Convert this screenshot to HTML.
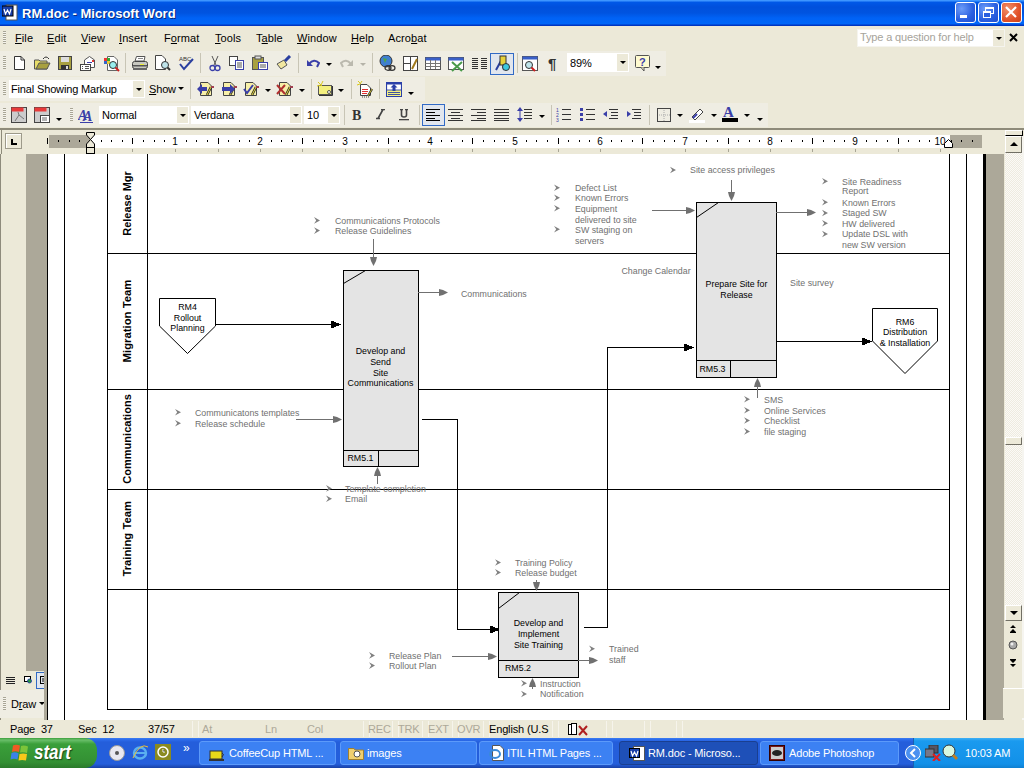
<!DOCTYPE html>
<html><head><meta charset="utf-8">
<style>
*{box-sizing:border-box}
html,body{margin:0;padding:0}
body{width:1024px;height:768px;overflow:hidden;position:relative;background:#ECE9D8;font-family:"Liberation Sans",sans-serif;font-size:11px;color:#000}
.a{position:absolute}
.t{position:absolute;white-space:nowrap;line-height:1}
.grip{position:absolute;width:3px;background:repeating-linear-gradient(#A8A595 0,#A8A595 1px,#F6F5EE 1px,#F6F5EE 2px)}
.dd{position:absolute;width:0;height:0;border-left:3px solid transparent;border-right:3px solid transparent;border-top:3px solid #000}
u{text-decoration:underline}
.dg text{font-family:"Liberation Sans",sans-serif}
</style></head><body>
<div class="a" style="left:0px;top:0px;width:1024px;height:26px;background:linear-gradient(#3D95FF 0,#3D95FF 1px,#0058E8 2px,#0050DC 7px,#0054E0 13px,#0062F5 18px,#0066F8 24px,#0035C0 25px)"></div>
<svg class="a" style="left:2px;top:4px" width="16" height="17" viewBox="0 0 16 17"><rect x="4" y="1" width="11" height="15" fill="#fff" stroke="#555" stroke-width="1"/><rect x="0" y="2" width="11" height="10" fill="#1A3FA8" stroke="#000" stroke-width="1"/><path d="M2,5 L3.5,10 L5.5,6 L7.5,10 L9,5" stroke="#fff" stroke-width="1.2" fill="none"/></svg>
<div class="t" style="left:22px;top:7px;font-size:13px;font-weight:bold;color:#fff;letter-spacing:0;text-shadow:1px 1px 0 #0A2A80">RM.doc - Microsoft Word</div>
<div class="a" style="left:955px;top:2px;width:21px;height:21px;border:1px solid #fff;border-radius:3px;background:radial-gradient(circle at 30% 30%,#6C9CF8,#2A5FE0 60%,#1E4FD0)"></div>
<svg class="a" style="left:955px;top:2px" width="21" height="21" viewBox="0 0 21 21"><rect x="5" y="13" width="7" height="3" fill="#fff"/></svg>
<div class="a" style="left:978px;top:2px;width:21px;height:21px;border:1px solid #fff;border-radius:3px;background:radial-gradient(circle at 30% 30%,#6C9CF8,#2A5FE0 60%,#1E4FD0)"></div>
<svg class="a" style="left:978px;top:2px" width="21" height="21" viewBox="0 0 21 21"><rect x="7.5" y="5.5" width="8" height="6" fill="none" stroke="#fff" stroke-width="1"/><rect x="7" y="5" width="9" height="2" fill="#fff"/><rect x="5.5" y="9.5" width="7" height="6" fill="#2A5FE0" stroke="#fff" stroke-width="1"/><rect x="5" y="9" width="8" height="2" fill="#fff"/></svg>
<div class="a" style="left:1001px;top:2px;width:21px;height:21px;border:1px solid #fff;border-radius:3px;background:radial-gradient(circle at 30% 30%,#F0906A,#E2532A 60%,#C8401A)"></div>
<svg class="a" style="left:1001px;top:2px" width="21" height="21" viewBox="0 0 21 21"><path d="M5,5 L15,15 M15,5 L5,15" stroke="#fff" stroke-width="2.2"/></svg>
<div class="grip" style="left:3px;top:31px;height:13px"></div>
<div class="t" style="left:15px;top:32.69px;font-size:11px;color:#000;letter-spacing:0.1px"><u>F</u>ile</div>
<div class="t" style="left:47px;top:32.69px;font-size:11px;color:#000;letter-spacing:0.1px"><u>E</u>dit</div>
<div class="t" style="left:81px;top:32.69px;font-size:11px;color:#000;letter-spacing:0.1px"><u>V</u>iew</div>
<div class="t" style="left:119px;top:32.69px;font-size:11px;color:#000;letter-spacing:0.1px"><u>I</u>nsert</div>
<div class="t" style="left:164px;top:32.69px;font-size:11px;color:#000;letter-spacing:0.1px">F<u>o</u>rmat</div>
<div class="t" style="left:215px;top:32.69px;font-size:11px;color:#000;letter-spacing:0.1px"><u>T</u>ools</div>
<div class="t" style="left:256px;top:32.69px;font-size:11px;color:#000;letter-spacing:0.1px">T<u>a</u>ble</div>
<div class="t" style="left:297px;top:32.69px;font-size:11px;color:#000;letter-spacing:0.1px"><u>W</u>indow</div>
<div class="t" style="left:351px;top:32.69px;font-size:11px;color:#000;letter-spacing:0.1px"><u>H</u>elp</div>
<div class="t" style="left:388px;top:32.69px;font-size:11px;color:#000;letter-spacing:0.1px">Acro<u>b</u>at</div>
<div class="a" style="left:857px;top:29px;width:148px;height:18px;background:#fff;border:1px solid #F5F4EE"></div>
<div class="a" style="left:993px;top:30px;width:11px;height:16px;background:#ECE9D8"></div>
<div class="dd" style="left:996px;top:37px;border-top-color:#000"></div>
<div class="t" style="left:860px;top:31.69px;font-size:11px;color:#A6A39A;letter-spacing:-0.15px;">Type a question for help</div>
<svg class="a" style="left:1009px;top:33px" width="10" height="10" viewBox="0 0 10 10"><path d="M1,1 L8,8 M8,1 L1,8" stroke="#000" stroke-width="2"/></svg>
<div class="a" style="left:0px;top:51px;width:666px;height:25px;background:#EFEDE3"></div>
<div class="grip" style="left:3px;top:56px;height:13px"></div>
<div class="a" style="left:125px;top:53px;width:1px;height:20px;background:#C8C5B5"></div>
<div class="a" style="left:200px;top:53px;width:1px;height:20px;background:#C8C5B5"></div>
<div class="a" style="left:298px;top:53px;width:1px;height:20px;background:#C8C5B5"></div>
<div class="a" style="left:372px;top:53px;width:1px;height:20px;background:#C8C5B5"></div>
<div class="a" style="left:517px;top:53px;width:1px;height:20px;background:#C8C5B5"></div>
<svg class="a" style="left:13px;top:56px" width="13" height="14" viewBox="0 0 13 14"><path d="M1.5,0.5 H8 L11.5,4 V13.5 H1.5 Z" fill="#fff" stroke="#333"/><path d="M8,0.5 V4 H11.5" fill="none" stroke="#333"/></svg>
<svg class="a" style="left:34px;top:55px" width="17" height="15" viewBox="0 0 17 15"><path d="M0.5,5 H5 L6,6 H13 V14 H0.5 Z" fill="#E8DE6A" stroke="#555"/><path d="M2,14 L5,8 H16 L13,14 Z" fill="#A8A040" stroke="#555"/><path d="M9,4 Q12,0 15,4" stroke="#333" fill="none"/></svg>
<svg class="a" style="left:58px;top:56px" width="14" height="14" viewBox="0 0 14 14"><rect x="0.5" y="0.5" width="13" height="13" fill="#A8A040" stroke="#444"/><rect x="3" y="1" width="8" height="5" fill="#ddd"/><rect x="3" y="9" width="8" height="4.5" fill="#333"/><rect x="8" y="10" width="2" height="3" fill="#ddd"/></svg>
<svg class="a" style="left:80px;top:55px" width="16" height="16" viewBox="0 0 16 16"><path d="M4.5,5 L9.5,1.5 L14.5,5 V12.5 H4.5 Z" fill="#fff" stroke="#555"/><path d="M7,7.5 H12" stroke="#3A3FA8"/><rect x="12" y="5" width="2" height="2" fill="#d33"/><rect x="0.5" y="9.5" width="10" height="6" fill="#fff" stroke="#444"/><path d="M2,11.5 H3 M5,11.5 H9 M2,13.5 H3 M5,13.5 H9" stroke="#555"/></svg>
<svg class="a" style="left:104px;top:56px" width="16" height="16" viewBox="0 0 16 16"><path d="M3.5,0.5 H10 L13.5,4 V14.5 H3.5 Z" fill="#fff" stroke="#666"/><rect x="0" y="2" width="3" height="3" fill="#e33"/><rect x="3" y="2" width="3" height="3" fill="#3a3"/><rect x="0" y="5" width="3" height="3" fill="#36c"/><rect x="3" y="5" width="3" height="3" fill="#ec3"/><circle cx="9" cy="9" r="3.5" fill="#9ee" stroke="#333"/><path d="M11.5,11.5 L15,15" stroke="#c22" stroke-width="2"/></svg>
<svg class="a" style="left:132px;top:56px" width="16" height="15" viewBox="0 0 16 15"><path d="M4.5,0.5 H13 L12,5 H3 Z" fill="#fff" stroke="#555"/><path d="M6,2.5 H11" stroke="#888"/><rect x="0.5" y="5.5" width="15" height="7" rx="2" fill="#C8C8C0" stroke="#444"/><rect x="1" y="9" width="14" height="1.5" fill="#555"/><rect x="8" y="8" width="4" height="1" fill="#ee3"/><rect x="1" y="12" width="14" height="2" fill="#666"/></svg>
<svg class="a" style="left:155px;top:55px" width="16" height="16" viewBox="0 0 16 16"><path d="M0.5,0.5 H7 L10.5,4 V14.5 H0.5 Z" fill="#fff" stroke="#444"/><circle cx="10" cy="10" r="3.5" fill="#BFE4EA" stroke="#333"/><path d="M12.5,12.5 L15,15" stroke="#333" stroke-width="2"/></svg>
<svg class="a" style="left:178px;top:55px" width="16" height="16" viewBox="0 0 16 16"><text x="1" y="6" font-size="6" font-family="Liberation Sans" fill="#333">ABC</text><path d="M2,9 L6,14 L15,4" stroke="#2A3F9F" stroke-width="2" fill="none"/></svg>
<svg class="a" style="left:209px;top:56px" width="12" height="16" viewBox="0 0 12 16"><path d="M3,0 L7,9 M9,0 L5,9" stroke="#555" stroke-width="1"/><circle cx="3.5" cy="12" r="2.5" fill="none" stroke="#3A3FA8" stroke-width="1.3"/><circle cx="8.5" cy="12" r="2.5" fill="none" stroke="#3A3FA8" stroke-width="1.3"/></svg>
<svg class="a" style="left:229px;top:56px" width="16" height="15" viewBox="0 0 16 15"><rect x="0.5" y="0.5" width="8" height="9" fill="#fff" stroke="#444"/><rect x="6.5" y="4.5" width="8" height="9" fill="#fff" stroke="#3A3FA8"/><path d="M8,7 H13 M8,9 H13 M8,11 H13" stroke="#555"/></svg>
<svg class="a" style="left:252px;top:55px" width="17" height="16" viewBox="0 0 17 16"><rect x="0.5" y="2.5" width="11" height="12" fill="#A8A040" stroke="#555"/><rect x="3" y="1" width="6" height="3" fill="#ddd" stroke="#555"/><rect x="6.5" y="7.5" width="9" height="7" fill="#fff" stroke="#3A3FA8"/><path d="M8,10 H14 M8,12 H14" stroke="#555"/></svg>
<svg class="a" style="left:276px;top:55px" width="16" height="16" viewBox="0 0 16 16"><path d="M1,9 L8,5 L11,10 L5,14 Z" fill="#F1E7A0" stroke="#555"/><path d="M9,6 L14,1" stroke="#2A3F9F" stroke-width="3"/></svg>
<svg class="a" style="left:306px;top:58px" width="14" height="11" viewBox="0 0 14 11"><path d="M3,6 Q8,0 13,5 L11,9" stroke="#3A3FA8" stroke-width="2" fill="none"/><path d="M1,2 L1,8 L7,8 Z" fill="#3A3FA8"/></svg>
<div class="dd" style="left:326px;top:63px;border-top-color:#000"></div>
<svg class="a" style="left:340px;top:58px" width="14" height="11" viewBox="0 0 14 11"><path d="M11,6 Q6,0 1,5 L3,9" stroke="#BBB9AE" stroke-width="2" fill="none"/><path d="M13,2 L13,8 L7,8 Z" fill="#BBB9AE"/></svg>
<div class="dd" style="left:360px;top:63px;border-top-color:#B5B3A8"></div>
<svg class="a" style="left:379px;top:55px" width="17" height="16" viewBox="0 0 17 16"><circle cx="7" cy="6" r="6" fill="#3F7FD0" stroke="#333"/><path d="M4,3 L8,4 L6,8 Z" fill="#4CA64C"/><ellipse cx="9" cy="13" rx="3" ry="2.3" fill="none" stroke="#333" stroke-width="1.2"/><ellipse cx="13" cy="13" rx="3" ry="2.3" fill="none" stroke="#333" stroke-width="1.2"/></svg>
<svg class="a" style="left:403px;top:56px" width="16" height="16" viewBox="0 0 16 16"><rect x="0.5" y="0.5" width="14" height="14" fill="#fff" stroke="#444"/><path d="M7.5,0.5 V14.5 M0.5,7.5 H7.5" stroke="#444"/><path d="M9,13 L14,3" stroke="#A0791A" stroke-width="2"/></svg>
<svg class="a" style="left:425px;top:57px" width="16" height="14" viewBox="0 0 16 14"><rect x="0.5" y="0.5" width="15" height="12" fill="#fff" stroke="#555"/><rect x="0.5" y="0.5" width="15" height="3" fill="#3A5FC8"/><path d="M5.5,3 V12 M10.5,3 V12 M0.5,6.5 H15 M0.5,9.5 H15" stroke="#777"/></svg>
<svg class="a" style="left:448px;top:57px" width="16" height="15" viewBox="0 0 16 15"><rect x="0.5" y="0.5" width="15" height="12" fill="#fff" stroke="#555"/><rect x="0.5" y="0.5" width="15" height="3" fill="#3A5FC8"/><path d="M4,5 L14,14 M14,5 L4,14" stroke="#4A9A4A" stroke-width="2"/></svg>
<svg class="a" style="left:472px;top:57px" width="15" height="13" viewBox="0 0 15 13"><path d="M0,1.5 H6 M0,3.5 H6 M0,5.5 H6 M0,7.5 H6 M0,9.5 H6 M0,11.5 H6 M9,1.5 H15 M9,3.5 H15 M9,5.5 H15 M9,7.5 H15 M9,9.5 H15 M9,11.5 H15" stroke="#333"/></svg>
<div class="a" style="left:490px;top:53px;width:24px;height:22px;background:#E1E6EE;border:1px solid #316AC5"></div>
<svg class="a" style="left:494px;top:55px" width="16" height="17" viewBox="0 0 16 17"><path d="M2,15 L8,4 L10,15" stroke="#2A3F9F" stroke-width="2" fill="none"/><rect x="6" y="1" width="6" height="9" fill="#E8D23A" stroke="#333"/><circle cx="12" cy="12" r="3.5" fill="#3CC8E0" stroke="#333"/></svg>
<svg class="a" style="left:522px;top:56px" width="16" height="16" viewBox="0 0 16 16"><rect x="0.5" y="0.5" width="15" height="14" fill="#fff" stroke="#555"/><rect x="0.5" y="0.5" width="15" height="3" fill="#3A5FC8"/><circle cx="7" cy="9" r="3.5" fill="#BFE4EA" stroke="#333"/><path d="M9.5,11.5 L13,15" stroke="#c22" stroke-width="2"/></svg>
<div class="t" style="left:548px;top:56.3px;font-size:15px;color:#333;font-weight:bold">¶</div>
<div class="a" style="left:567px;top:53px;width:62px;height:19px;background:#fff"></div>
<div class="a" style="left:617px;top:54px;width:11px;height:17px;background:#ECE9D8"></div>
<div class="t" style="left:570px;top:57.69px;font-size:11px;color:#000;letter-spacing:-0.15px;">89%</div>
<div class="dd" style="left:620px;top:61px;border-top-color:#000"></div>
<svg class="a" style="left:635px;top:55px" width="16" height="17" viewBox="0 0 16 17"><rect x="0.5" y="0.5" width="14" height="12" fill="#FFFBD0" stroke="#555" rx="1"/><path d="M6,12.5 L9,16 L9,12.5" fill="#FFFBD0" stroke="#555"/><text x="4" y="11" font-size="11" font-weight="bold" font-family="Liberation Sans" fill="#3A3FA8">?</text></svg>
<div class="dd" style="left:655px;top:66px;border-top-color:#000"></div>
<div class="a" style="left:0px;top:77px;width:425px;height:24px;background:#EFEDE3"></div>
<div class="grip" style="left:3px;top:82px;height:13px"></div>
<div class="a" style="left:9px;top:80px;width:136px;height:18px;background:#fff"></div>
<div class="a" style="left:133px;top:81px;width:11px;height:16px;background:#ECE9D8"></div>
<div class="dd" style="left:136px;top:88px;border-top-color:#000"></div>
<div class="t" style="left:11px;top:83.69px;font-size:11px;color:#000;letter-spacing:-0.15px;">Final Showing Markup</div>
<div class="t" style="left:149px;top:83.69px;font-size:11px;color:#000;letter-spacing:-0.15px;"><u>S</u>how</div>
<div class="dd" style="left:178px;top:87px;border-top-color:#000"></div>
<div class="a" style="left:190px;top:79px;width:1px;height:20px;background:#C8C5B5"></div>
<div class="a" style="left:311px;top:79px;width:1px;height:20px;background:#C8C5B5"></div>
<div class="a" style="left:351px;top:79px;width:1px;height:20px;background:#C8C5B5"></div>
<div class="a" style="left:379px;top:79px;width:1px;height:20px;background:#C8C5B5"></div>
<svg class="a" style="left:197px;top:81px" width="17" height="16" viewBox="0 0 17 16"><path d="M3.5,1.5 H11 L14.5,5 V14.5 H3.5 Z" fill="#F8F0A8" stroke="#444"/><path d="M14,6 L10,14" stroke="#222" stroke-width="2.5"/><path d="M14,6 L10,14" stroke="#F0E040" stroke-width="1"/><rect x="14" y="5" width="3" height="2" fill="#A04050"/><path d="M0,8 L5,3 V6 H10 V10 H5 V13 Z" fill="#3A3FA8"/></svg>
<svg class="a" style="left:220px;top:81px" width="17" height="16" viewBox="0 0 17 16"><path d="M3.5,1.5 H11 L14.5,5 V14.5 H3.5 Z" fill="#F8F0A8" stroke="#444"/><path d="M14,6 L10,14" stroke="#222" stroke-width="2.5"/><path d="M14,6 L10,14" stroke="#F0E040" stroke-width="1"/><rect x="14" y="5" width="3" height="2" fill="#A04050"/><path d="M15,8 L10,3 V6 H2 V10 H10 V13 Z" fill="#3A3FA8"/></svg>
<svg class="a" style="left:242px;top:81px" width="17" height="16" viewBox="0 0 17 16"><path d="M3.5,1.5 H11 L14.5,5 V14.5 H3.5 Z" fill="#F8F0A8" stroke="#444"/><path d="M14,6 L10,14" stroke="#222" stroke-width="2.5"/><path d="M14,6 L10,14" stroke="#F0E040" stroke-width="1"/><rect x="14" y="5" width="3" height="2" fill="#A04050"/><path d="M2,8 L5,12 L11,4" stroke="#3A3FA8" stroke-width="2" fill="none"/></svg>
<div class="dd" style="left:265px;top:89px;border-top-color:#000"></div>
<svg class="a" style="left:276px;top:81px" width="17" height="16" viewBox="0 0 17 16"><path d="M3.5,1.5 H11 L14.5,5 V14.5 H3.5 Z" fill="#F8F0A8" stroke="#444"/><path d="M14,6 L10,14" stroke="#222" stroke-width="2.5"/><path d="M14,6 L10,14" stroke="#F0E040" stroke-width="1"/><rect x="14" y="5" width="3" height="2" fill="#A04050"/><path d="M1,4 L9,13 M9,4 L1,13" stroke="#B03030" stroke-width="2"/></svg>
<div class="dd" style="left:299px;top:89px;border-top-color:#000"></div>
<svg class="a" style="left:317px;top:81px" width="17" height="16" viewBox="0 0 17 16"><rect x="1.5" y="4.5" width="13" height="9" fill="#F4F080" stroke="#555"/><path d="M2,14.5 H15.5 V5" stroke="#333" fill="none"/><circle cx="12" cy="11" r="1.5" fill="#fff" stroke="#333" stroke-width=".8"/><path d="M1,1 L5,5 M6,0 L4,4 M0,5 L4,4" stroke="#D8C820"/></svg>
<div class="dd" style="left:338px;top:89px;border-top-color:#000"></div>
<svg class="a" style="left:357px;top:81px" width="17" height="17" viewBox="0 0 17 17"><path d="M3.5,3.5 H10 L13.5,7 V14.5 H3.5 Z" fill="#fff" stroke="#444"/><path d="M5,8.5 H11 M5,10.5 H11 M5,12.5 H10" stroke="#E03030"/><path d="M15,8 L11,15" stroke="#222" stroke-width="2.2"/><path d="M15,8 L11,15" stroke="#F0E040" stroke-width=".8"/><path d="M1,0 L4,3 M5,0 L3,3 M0,4 L3,3" stroke="#D8C820"/><path d="M5,16 H12" stroke="#444" stroke-dasharray="1 1"/></svg>
<svg class="a" style="left:386px;top:82px" width="16" height="15" viewBox="0 0 16 15"><rect x="0.5" y="0.5" width="15" height="14" fill="#fff" stroke="#2A3FA8" stroke-width="1.2"/><rect x="1" y="8" width="14" height="6" fill="#F4F080"/><path d="M1,8 H15 M2,10.5 H14 M2,12.5 H14" stroke="#2A3FA8" stroke-width=".9"/><path d="M8,2 L11.5,5.5 H9.5 V9 H6.5 V5.5 H4.5 Z" fill="#2A3FA8"/><rect x="1" y="1" width="14" height="1.5" fill="#2A3FA8"/></svg>
<div class="dd" style="left:408px;top:92px;border-top-color:#000"></div>
<div class="a" style="left:0px;top:103px;width:768px;height:24px;background:#EFEDE3"></div>
<div class="grip" style="left:3px;top:108px;height:13px"></div>
<div class="grip" style="left:70px;top:108px;height:13px"></div>
<svg class="a" style="left:11px;top:107px" width="17" height="17" viewBox="0 0 17 17"><rect x="0.5" y="0.5" width="15" height="15" fill="#ccc" stroke="#444"/><rect x="0.5" y="0.5" width="12" height="4" fill="#E83A3A"/><path d="M4,14 L8,8 L13,12 M8,8 L7,5" stroke="#777" fill="none"/></svg>
<svg class="a" style="left:34px;top:107px" width="17" height="17" viewBox="0 0 17 17"><rect x="0.5" y="0.5" width="15" height="15" fill="#ccc" stroke="#444"/><rect x="0.5" y="0.5" width="12" height="4" fill="#E83A3A"/><rect x="6.5" y="8.5" width="9" height="7" fill="#fff" stroke="#444"/><path d="M8,11 H13 M8,13 H13" stroke="#666"/></svg>
<div class="dd" style="left:56px;top:118px;border-top-color:#000"></div>
<svg class="a" style="left:78px;top:107px" width="16" height="17" viewBox="0 0 16 17"><text x="0" y="13" font-size="14" font-style="italic" font-weight="bold" font-family="Liberation Serif" fill="#3A3FA8">A</text><text x="5" y="14" font-size="14" font-style="italic" font-weight="bold" font-family="Liberation Serif" fill="#3A3FA8">A</text><path d="M2,15.5 H15" stroke="#3A3FA8"/></svg>
<div class="a" style="left:99px;top:106px;width:90px;height:18px;background:#fff"></div>
<div class="a" style="left:177px;top:107px;width:11px;height:16px;background:#ECE9D8"></div>
<div class="dd" style="left:180px;top:114px;border-top-color:#000"></div>
<div class="t" style="left:102px;top:109.69px;font-size:11px;color:#000;letter-spacing:-0.15px;">Normal</div>
<div class="a" style="left:191px;top:106px;width:111px;height:18px;background:#fff"></div>
<div class="a" style="left:290px;top:107px;width:11px;height:16px;background:#ECE9D8"></div>
<div class="dd" style="left:293px;top:114px;border-top-color:#000"></div>
<div class="t" style="left:194px;top:109.69px;font-size:11px;color:#000;letter-spacing:-0.15px;">Verdana</div>
<div class="a" style="left:304px;top:106px;width:36px;height:18px;background:#fff"></div>
<div class="a" style="left:328px;top:107px;width:11px;height:16px;background:#ECE9D8"></div>
<div class="dd" style="left:331px;top:114px;border-top-color:#000"></div>
<div class="t" style="left:307px;top:109.69px;font-size:11px;color:#000;letter-spacing:-0.15px;">10</div>
<div class="a" style="left:344px;top:105px;width:1px;height:20px;background:#C8C5B5"></div>
<div class="a" style="left:419px;top:105px;width:1px;height:20px;background:#C8C5B5"></div>
<div class="a" style="left:551px;top:105px;width:1px;height:20px;background:#C8C5B5"></div>
<div class="a" style="left:649px;top:105px;width:1px;height:20px;background:#C8C5B5"></div>
<div class="t" style="left:352px;top:109.15px;font-size:14px;color:#333;font-family:'Liberation Serif';font-weight:bold">B</div>
<svg class="a" style="left:375px;top:109px" width="11" height="11" viewBox="0 0 11 11"><path d="M6,0.5 H10 M1,9.5 H5 M8,0.5 L3,9.5" stroke="#444" stroke-width="1.6"/></svg>
<svg class="a" style="left:399px;top:109px" width="10" height="12" viewBox="0 0 10 12"><path d="M1,0.5 H4 M6,0.5 H9 M2.5,0.5 V6 Q2.5,8 5,8 Q7.5,8 7.5,6 V0.5" stroke="#444" stroke-width="1.6" fill="none"/><rect x="0" y="10" width="10" height="1.3" fill="#444"/></svg>
<div class="a" style="left:422px;top:104px;width:23px;height:22px;background:#E1E6EE;border:1px solid #316AC5"></div>
<svg class="a" style="left:426px;top:108px" width="16" height="14" viewBox="0 0 16 14"><path d="M0,1.5 H14 M0,4.5 H9 M0,7.5 H14 M0,10.5 H9 M0,12.5 H14" stroke="#000"/></svg>
<svg class="a" style="left:448px;top:108px" width="16" height="14" viewBox="0 0 16 14"><path d="M0,1.5 H15 M3,4.5 H12 M0,7.5 H15 M3,10.5 H12 M0,12.5 H15" stroke="#333"/></svg>
<svg class="a" style="left:471px;top:108px" width="16" height="14" viewBox="0 0 16 14"><path d="M0,1.5 H15 M6,4.5 H15 M0,7.5 H15 M6,10.5 H15 M0,12.5 H15" stroke="#333"/></svg>
<svg class="a" style="left:494px;top:108px" width="16" height="14" viewBox="0 0 16 14"><path d="M0,1.5 H15 M0,4.5 H15 M0,7.5 H15 M0,10.5 H15 M0,12.5 H15" stroke="#333"/></svg>
<svg class="a" style="left:517px;top:107px" width="16" height="16" viewBox="0 0 16 16"><path d="M7,2.5 H15 M7,5.5 H15 M7,8.5 H15 M7,11.5 H15" stroke="#333"/><path d="M3,0 L6,4 H0 Z M3,15 L6,11 H0 Z" fill="#3A3FA8"/><path d="M3,3 V12" stroke="#3A3FA8"/></svg>
<div class="dd" style="left:539px;top:115px;border-top-color:#000"></div>
<svg class="a" style="left:556px;top:107px" width="16" height="16" viewBox="0 0 16 16"><path d="M6,2.5 H15 M6,7.5 H15 M6,12.5 H15" stroke="#333"/><text x="0" y="5" font-size="5" fill="#3A3FA8" font-family="Liberation Sans">1</text><text x="0" y="10" font-size="5" fill="#3A3FA8" font-family="Liberation Sans">2</text><text x="0" y="15" font-size="5" fill="#3A3FA8" font-family="Liberation Sans">3</text></svg>
<svg class="a" style="left:580px;top:107px" width="16" height="16" viewBox="0 0 16 16"><path d="M6,2.5 H15 M6,7.5 H15 M6,12.5 H15" stroke="#333"/><rect x="0" y="1" width="3" height="3" fill="#3A3FA8"/><rect x="0" y="6" width="3" height="3" fill="#3A3FA8"/><rect x="0" y="11" width="3" height="3" fill="#3A3FA8"/></svg>
<svg class="a" style="left:603px;top:107px" width="16" height="16" viewBox="0 0 16 16"><path d="M6,2.5 H15 M8,5.5 H15 M8,8.5 H15 M6,11.5 H15" stroke="#333"/><path d="M0,7 L4,4 V10 Z" fill="#3A3FA8"/></svg>
<svg class="a" style="left:626px;top:107px" width="16" height="16" viewBox="0 0 16 16"><path d="M6,2.5 H15 M8,5.5 H15 M8,8.5 H15 M6,11.5 H15" stroke="#333"/><path d="M5,7 L1,4 V10 Z" fill="#3A3FA8"/></svg>
<svg class="a" style="left:656px;top:107px" width="16" height="16" viewBox="0 0 16 16"><rect x="1.5" y="1.5" width="13" height="13" fill="none" stroke="#444"/><path d="M8,3 V14 M3,8 H14" stroke="#aaa" stroke-dasharray="1 1"/></svg>
<div class="dd" style="left:677px;top:114px;border-top-color:#000"></div>
<svg class="a" style="left:689px;top:106px" width="16" height="17" viewBox="0 0 16 17"><path d="M3,11 L11,3 L14,6 L6,14 Z" fill="#fff" stroke="#444"/><path d="M4,12 L8,8" stroke="#3A3FA8" stroke-width="2"/><rect x="0" y="14" width="16" height="3" fill="#fff"/></svg>
<div class="dd" style="left:711px;top:114px;border-top-color:#000"></div>
<svg class="a" style="left:722px;top:105px" width="16" height="17" viewBox="0 0 16 17"><text x="1" y="12" font-size="15" font-weight="bold" font-family="Liberation Serif" fill="#3A3FA8">A</text><rect x="0" y="13" width="16" height="4" fill="#000"/></svg>
<div class="dd" style="left:744px;top:114px;border-top-color:#000"></div>
<div class="dd" style="left:757px;top:118px;border-top-color:#000"></div>
<div class="a" style="left:0px;top:128px;width:1024px;height:2px;background:#8E8B7A"></div>
<div class="a" style="left:1px;top:130px;width:1px;height:24px;background:#8E8B7A"></div>
<div class="a" style="left:5px;top:133px;width:17px;height:16px;background:#ECE9D8;border:1px solid #9D9A8A;box-shadow:inset 1px 1px 0 #fff"></div>
<svg class="a" style="left:11px;top:139px" width="7" height="7" viewBox="0 0 7 7"><path d="M1,0 V5 H6" stroke="#000" stroke-width="2" fill="none"/></svg>
<div class="a" style="left:49px;top:135px;width:41px;height:13px;background:#ACA899"></div>
<div class="a" style="left:90px;top:135px;width:860px;height:13px;background:#fff"></div>
<div class="a" style="left:950px;top:135px;width:32px;height:13px;background:#ACA899"></div>
<svg class="a" style="left:0;top:0" width="1024" height="160"><rect x="58" y="140" width="1" height="2" fill="#000"/><rect x="69" y="140" width="1" height="2" fill="#000"/><rect x="79" y="140" width="1" height="2" fill="#000"/><rect x="101" y="140" width="1" height="2" fill="#000"/><rect x="111" y="140" width="1" height="2" fill="#000"/><rect x="122" y="140" width="1" height="2" fill="#000"/><rect x="132" y="138" width="1" height="6" fill="#000"/><rect x="143" y="140" width="1" height="2" fill="#000"/><rect x="154" y="140" width="1" height="2" fill="#000"/><rect x="164" y="140" width="1" height="2" fill="#000"/><text x="175.0" y="145" font-size="10" font-family="Liberation Sans" text-anchor="middle" fill="#000">1</text><rect x="186" y="140" width="1" height="2" fill="#000"/><rect x="196" y="140" width="1" height="2" fill="#000"/><rect x="207" y="140" width="1" height="2" fill="#000"/><rect x="218" y="138" width="1" height="6" fill="#000"/><rect x="228" y="140" width="1" height="2" fill="#000"/><rect x="239" y="140" width="1" height="2" fill="#000"/><rect x="249" y="140" width="1" height="2" fill="#000"/><text x="260.0" y="145" font-size="10" font-family="Liberation Sans" text-anchor="middle" fill="#000">2</text><rect x="271" y="140" width="1" height="2" fill="#000"/><rect x="281" y="140" width="1" height="2" fill="#000"/><rect x="292" y="140" width="1" height="2" fill="#000"/><rect x="302" y="138" width="1" height="6" fill="#000"/><rect x="313" y="140" width="1" height="2" fill="#000"/><rect x="324" y="140" width="1" height="2" fill="#000"/><rect x="334" y="140" width="1" height="2" fill="#000"/><text x="345.0" y="145" font-size="10" font-family="Liberation Sans" text-anchor="middle" fill="#000">3</text><rect x="356" y="140" width="1" height="2" fill="#000"/><rect x="366" y="140" width="1" height="2" fill="#000"/><rect x="377" y="140" width="1" height="2" fill="#000"/><rect x="388" y="138" width="1" height="6" fill="#000"/><rect x="398" y="140" width="1" height="2" fill="#000"/><rect x="409" y="140" width="1" height="2" fill="#000"/><rect x="419" y="140" width="1" height="2" fill="#000"/><text x="430.0" y="145" font-size="10" font-family="Liberation Sans" text-anchor="middle" fill="#000">4</text><rect x="441" y="140" width="1" height="2" fill="#000"/><rect x="451" y="140" width="1" height="2" fill="#000"/><rect x="462" y="140" width="1" height="2" fill="#000"/><rect x="472" y="138" width="1" height="6" fill="#000"/><rect x="483" y="140" width="1" height="2" fill="#000"/><rect x="494" y="140" width="1" height="2" fill="#000"/><rect x="504" y="140" width="1" height="2" fill="#000"/><text x="515.0" y="145" font-size="10" font-family="Liberation Sans" text-anchor="middle" fill="#000">5</text><rect x="526" y="140" width="1" height="2" fill="#000"/><rect x="536" y="140" width="1" height="2" fill="#000"/><rect x="547" y="140" width="1" height="2" fill="#000"/><rect x="558" y="138" width="1" height="6" fill="#000"/><rect x="568" y="140" width="1" height="2" fill="#000"/><rect x="579" y="140" width="1" height="2" fill="#000"/><rect x="589" y="140" width="1" height="2" fill="#000"/><text x="600.0" y="145" font-size="10" font-family="Liberation Sans" text-anchor="middle" fill="#000">6</text><rect x="611" y="140" width="1" height="2" fill="#000"/><rect x="621" y="140" width="1" height="2" fill="#000"/><rect x="632" y="140" width="1" height="2" fill="#000"/><rect x="642" y="138" width="1" height="6" fill="#000"/><rect x="653" y="140" width="1" height="2" fill="#000"/><rect x="664" y="140" width="1" height="2" fill="#000"/><rect x="674" y="140" width="1" height="2" fill="#000"/><text x="685.0" y="145" font-size="10" font-family="Liberation Sans" text-anchor="middle" fill="#000">7</text><rect x="696" y="140" width="1" height="2" fill="#000"/><rect x="706" y="140" width="1" height="2" fill="#000"/><rect x="717" y="140" width="1" height="2" fill="#000"/><rect x="728" y="138" width="1" height="6" fill="#000"/><rect x="738" y="140" width="1" height="2" fill="#000"/><rect x="749" y="140" width="1" height="2" fill="#000"/><rect x="759" y="140" width="1" height="2" fill="#000"/><text x="770.0" y="145" font-size="10" font-family="Liberation Sans" text-anchor="middle" fill="#000">8</text><rect x="781" y="140" width="1" height="2" fill="#000"/><rect x="791" y="140" width="1" height="2" fill="#000"/><rect x="802" y="140" width="1" height="2" fill="#000"/><rect x="812" y="138" width="1" height="6" fill="#000"/><rect x="823" y="140" width="1" height="2" fill="#000"/><rect x="834" y="140" width="1" height="2" fill="#000"/><rect x="844" y="140" width="1" height="2" fill="#000"/><text x="855.0" y="145" font-size="10" font-family="Liberation Sans" text-anchor="middle" fill="#000">9</text><rect x="866" y="140" width="1" height="2" fill="#000"/><rect x="876" y="140" width="1" height="2" fill="#000"/><rect x="887" y="140" width="1" height="2" fill="#000"/><rect x="898" y="138" width="1" height="6" fill="#000"/><rect x="908" y="140" width="1" height="2" fill="#000"/><rect x="919" y="140" width="1" height="2" fill="#000"/><rect x="929" y="140" width="1" height="2" fill="#000"/><text x="940.0" y="145" font-size="10" font-family="Liberation Sans" text-anchor="middle" fill="#000">10</text><rect x="951" y="140" width="1" height="2" fill="#000"/><rect x="961" y="140" width="1" height="2" fill="#000"/><rect x="972" y="140" width="1" height="2" fill="#000"/><rect x="132" y="149" width="1" height="3" fill="#A8A595"/><rect x="175" y="149" width="1" height="3" fill="#A8A595"/><rect x="218" y="149" width="1" height="3" fill="#A8A595"/><rect x="260" y="149" width="1" height="3" fill="#A8A595"/><rect x="302" y="149" width="1" height="3" fill="#A8A595"/><rect x="345" y="149" width="1" height="3" fill="#A8A595"/><rect x="388" y="149" width="1" height="3" fill="#A8A595"/><rect x="430" y="149" width="1" height="3" fill="#A8A595"/><rect x="472" y="149" width="1" height="3" fill="#A8A595"/><rect x="515" y="149" width="1" height="3" fill="#A8A595"/><rect x="558" y="149" width="1" height="3" fill="#A8A595"/><rect x="600" y="149" width="1" height="3" fill="#A8A595"/><rect x="642" y="149" width="1" height="3" fill="#A8A595"/><rect x="685" y="149" width="1" height="3" fill="#A8A595"/><rect x="728" y="149" width="1" height="3" fill="#A8A595"/><rect x="770" y="149" width="1" height="3" fill="#A8A595"/><rect x="812" y="149" width="1" height="3" fill="#A8A595"/><rect x="855" y="149" width="1" height="3" fill="#A8A595"/><rect x="898" y="149" width="1" height="3" fill="#A8A595"/><rect x="940" y="149" width="1" height="3" fill="#A8A595"/></svg>
<div class="a" style="left:47px;top:138px;width:1px;height:6px;background:#000"></div>
<svg class="a" style="left:86px;top:132px" width="10" height="23" viewBox="0 0 10 23"><path d="M0.5,0.5 H8.5 V3 L4.5,7.5 L8.5,12 V15.5 H0.5 V12 L4.5,7.5 L0.5,3 Z" fill="#ECE9D8" stroke="#000"/><rect x="0.5" y="15.5" width="8" height="6" fill="#ECE9D8" stroke="#000"/></svg>
<svg class="a" style="left:944px;top:139px" width="10" height="10" viewBox="0 0 10 10"><path d="M0.5,8.5 V4.5 L4.5,0.5 L8.5,4.5 V8.5 Z" fill="#fff" stroke="#000"/></svg>
<div class="a" style="left:0px;top:154px;width:1px;height:566px;background:#8E8B7C"></div>
<div class="a" style="left:26px;top:154px;width:21px;height:517px;background:#ACA899"></div>
<svg class="a" style="left:6px;top:676px" width="10" height="10" viewBox="0 0 10 10"><path d="M0,1.5 H9 M0,3.5 H9 M0,5.5 H9 M0,7.5 H9" stroke="#222"/></svg>
<svg class="a" style="left:24px;top:676px" width="9" height="8" viewBox="0 0 9 8"><rect x="0.5" y="0.5" width="6" height="5" fill="#fff" stroke="#000"/><circle cx="5.5" cy="5" r="2" fill="#2A9A3A" stroke="#1A2FA8" stroke-width=".8"/></svg>
<div class="a" style="left:36px;top:672px;width:10px;height:17px;background:#E1E6EE;border:1px solid #316AC5;border-right:none"></div>
<svg class="a" style="left:40px;top:676px" width="8" height="9" viewBox="0 0 8 9"><rect x="0.5" y="0.5" width="6" height="7" fill="none" stroke="#000"/><path d="M2,3 H5 M2,5 H5" stroke="#000"/></svg>
<div class="a" style="left:0px;top:690px;width:44px;height:28px;background:#EFEDE3"></div>
<div class="grip" style="left:3px;top:697px;height:13px"></div>
<div class="t" style="left:11px;top:698.69px;font-size:11px;color:#000;letter-spacing:-0.15px;">D<u>r</u>aw</div>
<div class="dd" style="left:39px;top:702px;border-top-color:#000"></div>
<div class="a" style="left:44px;top:671px;width:3px;height:49px;background:#ACA899"></div>
<div class="a" style="left:47px;top:154px;width:936px;height:566px;background:#fff"></div>
<div class="a" style="left:47px;top:154px;width:1px;height:566px;background:#000"></div>
<div class="a" style="left:983px;top:154px;width:3px;height:566px;background:#000"></div>
<div class="a" style="left:986px;top:154px;width:18px;height:566px;background:#ACA899"></div>
<div class="a" style="left:1005px;top:130px;width:19px;height:590px;background:#ECE9D8"></div>
<div class="a" style="left:1005px;top:153px;width:17px;height:452px;background-color:#FBFAF6;background-image:repeating-conic-gradient(#EEEBE0 0 25%,#FBFAF6 0 50%);background-size:2px 2px"></div>
<div class="a" style="left:1005px;top:130px;width:18px;height:6px;background:#ECE9D8;border:1px solid;border-color:#fff #000 #000 #fff"></div>
<div class="a" style="left:1022px;top:136px;width:2px;height:584px;background:#F6F5F0"></div>
<div class="a" style="left:1005px;top:136px;width:17px;height:17px;background:#ECE9D8;border:1px solid;border-color:#fff #716F64 #716F64 #fff"></div>
<div class="a" style="left:1010px;top:142px;width:0;height:0;border-left:4px solid transparent;border-right:4px solid transparent;border-bottom:4px solid #000"></div>
<div class="a" style="left:1005px;top:437px;width:17px;height:8px;background:#ECE9D8;border:1px solid;border-color:#fff #716F64 #716F64 #fff"></div>
<div class="a" style="left:1005px;top:605px;width:17px;height:16px;background:#ECE9D8;border:1px solid;border-color:#fff #716F64 #716F64 #fff"></div>
<div class="a" style="left:1010px;top:611px;width:0;height:0;border-left:4px solid transparent;border-right:4px solid transparent;border-top:4px solid #000"></div>
<svg class="a" style="left:1009px;top:624px" width="8" height="10" viewBox="0 0 8 10"><path d="M1,4 L4,1 L7,4 Z M1,8 L4,5 L7,8 Z" fill="#000"/><rect x="1" y="8" width="6" height="1" fill="#000"/></svg>
<svg class="a" style="left:1008px;top:640px" width="10" height="10" viewBox="0 0 10 10"><circle cx="5" cy="5" r="4" fill="#A8A8A8" stroke="#555"/><circle cx="4" cy="4" r="1.5" fill="#eee"/></svg>
<svg class="a" style="left:1009px;top:659px" width="8" height="10" viewBox="0 0 8 10"><rect x="1" y="0" width="6" height="1" fill="#000"/><path d="M1,1 L4,4 L7,1 Z M1,5 L4,8 L7,5 Z" fill="#000"/></svg>
<div class="a" style="left:1003px;top:688px;width:21px;height:30px;background:#ECE9D8;border-top:1px solid #fff"></div>
<div class="a" style="left:0px;top:720px;width:1024px;height:18px;background:#ECE9D8"></div>
<div class="a" style="left:192px;top:721px;width:1px;height:16px;background:#F6F4EC"></div>
<div class="a" style="left:198px;top:721px;width:1px;height:16px;background:#F6F4EC"></div>
<div class="a" style="left:363px;top:721px;width:1px;height:16px;background:#F6F4EC"></div>
<div class="a" style="left:369px;top:721px;width:1px;height:16px;background:#F6F4EC"></div>
<div class="a" style="left:392px;top:721px;width:1px;height:16px;background:#F6F4EC"></div>
<div class="a" style="left:398px;top:721px;width:1px;height:16px;background:#F6F4EC"></div>
<div class="a" style="left:422px;top:721px;width:1px;height:16px;background:#F6F4EC"></div>
<div class="a" style="left:428px;top:721px;width:1px;height:16px;background:#F6F4EC"></div>
<div class="a" style="left:452px;top:721px;width:1px;height:16px;background:#F6F4EC"></div>
<div class="a" style="left:458px;top:721px;width:1px;height:16px;background:#F6F4EC"></div>
<div class="a" style="left:483px;top:721px;width:1px;height:16px;background:#F6F4EC"></div>
<div class="a" style="left:489px;top:721px;width:1px;height:16px;background:#F6F4EC"></div>
<div class="a" style="left:552px;top:721px;width:1px;height:16px;background:#F6F4EC"></div>
<div class="a" style="left:558px;top:721px;width:1px;height:16px;background:#F6F4EC"></div>
<div class="a" style="left:606px;top:721px;width:1px;height:16px;background:#F6F4EC"></div>
<div class="a" style="left:612px;top:721px;width:1px;height:16px;background:#F6F4EC"></div>
<div class="a" style="left:644px;top:721px;width:1px;height:16px;background:#F6F4EC"></div>
<div class="a" style="left:650px;top:721px;width:1px;height:16px;background:#F6F4EC"></div>
<div class="a" style="left:676px;top:721px;width:1px;height:16px;background:#F6F4EC"></div>
<div class="a" style="left:682px;top:721px;width:1px;height:16px;background:#F6F4EC"></div>
<div class="t" style="left:10px;top:723.69px;font-size:11px;color:#000;letter-spacing:-0.15px;">Page&nbsp; 37</div>
<div class="t" style="left:78px;top:723.69px;font-size:11px;color:#000;letter-spacing:-0.15px;">Sec&nbsp; 12</div>
<div class="t" style="left:148px;top:723.69px;font-size:11px;color:#000;letter-spacing:-0.15px;">37/57</div>
<div class="t" style="left:202px;top:723.69px;font-size:11px;color:#ACA899;letter-spacing:-0.15px;">At</div>
<div class="t" style="left:265px;top:723.69px;font-size:11px;color:#ACA899;letter-spacing:-0.15px;">Ln</div>
<div class="t" style="left:307px;top:723.69px;font-size:11px;color:#ACA899;letter-spacing:-0.15px;">Col</div>
<div class="t" style="left:368px;top:723.69px;font-size:11px;color:#ACA899;letter-spacing:-0.15px;">REC</div>
<div class="t" style="left:398px;top:723.69px;font-size:11px;color:#ACA899;letter-spacing:-0.15px;">TRK</div>
<div class="t" style="left:428px;top:723.69px;font-size:11px;color:#ACA899;letter-spacing:-0.15px;">EXT</div>
<div class="t" style="left:457px;top:723.69px;font-size:11px;color:#ACA899;letter-spacing:-0.15px;">OVR</div>
<div class="t" style="left:489px;top:723.69px;font-size:11px;color:#000;letter-spacing:-0.15px;">English (U.S</div>
<svg class="a" style="left:568px;top:722px" width="21" height="15" viewBox="0 0 21 15"><rect x="0.5" y="2.5" width="5" height="10" fill="#fff" stroke="#000"/><rect x="3.5" y="1.5" width="5" height="11" fill="#fff" stroke="#000"/><path d="M11,4 L19,13 M19,4 L11,13" stroke="#B02020" stroke-width="2"/></svg>
<div class="a" style="left:0px;top:738px;width:1024px;height:30px;background:linear-gradient(#3F7FF0 0,#2F70F0 1px,#245EDB 4px,#245EDB 26px,#1941A5 30px)"></div>
<div class="a" style="left:0;top:738px;width:97px;height:30px;border-radius:0 12px 12px 0;background:linear-gradient(#3C9F3C 0,#6ABF6A 2px,#3A9F3A 6px,#339033 24px,#2A7A2A 30px)"></div>
<svg class="a" style="left:10px;top:744px" width="19" height="18" viewBox="0 0 19 18"><path d="M3,1.5 Q6,0 10,1.5 L9,8 Q5,6.5 2,8 Z" fill="#F05A24"/><path d="M11,2 Q14,1 18,2.5 L17,9 Q14,8 10,8.5 Z" fill="#7CC43A"/><path d="M1.5,9 Q5,7.5 8.5,9.5 L7.5,15.5 Q4,14 0.5,15.5 Z" fill="#3A82E8"/><path d="M9.5,10 Q13,9 17,10 L16,16.5 Q12,15.5 8.5,16.5 Z" fill="#F8C81A"/></svg>
<div class="t" style="left:34px;top:745px;font-size:17px;font-weight:bold;font-style:italic;color:#fff;text-shadow:1px 1px 1px #1A4A1A;transform:scaleY(1.15);transform-origin:0 16px">start</div>
<svg class="a" style="left:109px;top:745px" width="16" height="16" viewBox="0 0 16 16"><circle cx="8" cy="8" r="7.5" fill="#E8E8F0" stroke="#999"/><circle cx="8" cy="8" r="2" fill="#555"/></svg>
<svg class="a" style="left:132px;top:744px" width="17" height="17" viewBox="0 0 17 17"><ellipse cx="8" cy="9" rx="6" ry="5.5" fill="none" stroke="#5AB0F0" stroke-width="2.5"/><path d="M3,9 H13" stroke="#5AB0F0" stroke-width="2"/><path d="M1,14 Q8,-2 16,3" stroke="#F0C030" stroke-width="1" fill="none"/></svg>
<svg class="a" style="left:155px;top:744px" width="16" height="16" viewBox="0 0 16 16"><rect x="0" y="0" width="16" height="16" fill="#8A8A20"/><circle cx="8" cy="8" r="5" fill="none" stroke="#fff" stroke-width="1.5"/><path d="M8,5 V8 H10" stroke="#fff"/></svg>
<div class="t" style="left:183px;top:741.84px;font-size:12px;color:#fff;">»</div>
<div class="a" style="left:199px;top:741px;width:137px;height:24px;border-radius:3px;background:#3C81F3;border:1px solid #5C9AFA"></div>

<div class="t" style="left:199px;top:-0.85px;font-size:1px;color:#000;"></div>
<div class="a" style="left:340px;top:741px;width:137px;height:24px;border-radius:3px;background:#3C81F3;border:1px solid #5C9AFA"></div>

<div class="t" style="left:340px;top:-0.85px;font-size:1px;color:#000;"></div>
<div class="a" style="left:479px;top:741px;width:134px;height:24px;border-radius:3px;background:#3C81F3;border:1px solid #5C9AFA"></div>

<div class="t" style="left:479px;top:-0.85px;font-size:1px;color:#000;"></div>
<div class="a" style="left:619px;top:741px;width:139px;height:24px;border-radius:3px;background:#1E50B8;border:1px solid #1A3F90"></div>

<div class="t" style="left:619px;top:-0.85px;font-size:1px;color:#000;"></div>
<div class="a" style="left:760px;top:741px;width:139px;height:24px;border-radius:3px;background:#3C81F3;border:1px solid #5C9AFA"></div>

<div class="t" style="left:760px;top:-0.85px;font-size:1px;color:#000;"></div>
<svg class="a" style="left:209px;top:746px" width="17" height="16" viewBox="0 0 17 16"><rect x="1" y="5" width="12" height="8" fill="#E8D81A" stroke="#333"/><path d="M13,7 Q16,8 13,11" stroke="#333" fill="none"/><rect x="0" y="13" width="15" height="2" fill="#333"/></svg>
<div class="t" style="left:229px;top:747.69px;font-size:11px;color:#fff;letter-spacing:-0.15px;">CoffeeCup HTML ...</div>
<svg class="a" style="left:348px;top:745px" width="16" height="16" viewBox="0 0 16 16"><path d="M0.5,3.5 H6 L7,5 H15.5 V14.5 H0.5 Z" fill="#F0D070" stroke="#A08030"/><circle cx="9" cy="9" r="3" fill="#fff" stroke="#555"/></svg>
<div class="t" style="left:367px;top:747.69px;font-size:11px;color:#fff;letter-spacing:-0.15px;">images</div>
<svg class="a" style="left:489px;top:745px" width="16" height="16" viewBox="0 0 16 16"><path d="M3.5,0.5 H11 L14.5,4 V15.5 H3.5 Z" fill="#fff" stroke="#555"/><ellipse cx="6" cy="9" rx="5" ry="4" fill="none" stroke="#3A8AD8" stroke-width="2"/></svg>
<div class="t" style="left:507px;top:747.69px;font-size:11px;color:#fff;letter-spacing:-0.15px;">ITIL HTML Pages ...</div>
<svg class="a" style="left:629px;top:745px" width="16" height="16" viewBox="0 0 16 16"><rect x="4.5" y="1.5" width="11" height="14" fill="#fff" stroke="#555"/><rect x="0.5" y="3.5" width="10" height="9" fill="#1A3FA8" stroke="#000"/><path d="M2,6 L3.5,11 L5.5,7 L7.5,11 L9,6" stroke="#fff" stroke-width="1.2" fill="none"/></svg>
<div class="t" style="left:648px;top:747.69px;font-size:11px;color:#fff;letter-spacing:-0.15px;">RM.doc - Microso...</div>
<svg class="a" style="left:769px;top:745px" width="16" height="16" viewBox="0 0 16 16"><rect x="0.5" y="0.5" width="15" height="15" fill="#7A1A1A" stroke="#300"/><rect x="2" y="2" width="12" height="12" fill="#ccc"/><ellipse cx="8" cy="8" rx="5" ry="3" fill="#222"/></svg>
<div class="t" style="left:789px;top:747.69px;font-size:11px;color:#fff;letter-spacing:-0.15px;">Adobe Photoshop</div>
<div class="a" style="left:913px;top:738px;width:111px;height:30px;background:linear-gradient(#3FB0F5 0,#1A9AEF 3px,#1290E8 26px,#0F7FD0 30px);border-left:1px solid #1A5FB0"></div>
<svg class="a" style="left:905px;top:745px" width="17" height="17" viewBox="0 0 17 17"><circle cx="8" cy="8" r="7.5" fill="#4A90F0" stroke="#fff"/><path d="M10,4 L6,8 L10,12" stroke="#fff" stroke-width="2" fill="none"/></svg>
<svg class="a" style="left:925px;top:745px" width="16" height="16" viewBox="0 0 16 16"><rect x="4" y="0" width="9" height="8" fill="#556" stroke="#333"/><rect x="0" y="4" width="9" height="8" fill="#778" stroke="#333"/><path d="M8,9 L15,16 M15,9 L8,16" stroke="#E02020" stroke-width="2"/></svg>
<svg class="a" style="left:942px;top:744px" width="16" height="17" viewBox="0 0 16 17"><circle cx="7" cy="7" r="6" fill="#D8F8E0" stroke="#333"/><path d="M11,11 L15,15" stroke="#C08020" stroke-width="3"/></svg>
<div class="t" style="left:965px;top:747.69px;font-size:11px;color:#fff;letter-spacing:-0.15px;">10:03 AM</div>
<svg class="a dg" style="left:0;top:0" width="1024" height="768" viewBox="0 0 1024 768">
<defs><path id="bl" d="M0,0 L6,3.3 L0,6.6 L2.2,3.3 Z" fill="#808080"/></defs>
<rect x="64" y="154" width="1" height="566" fill="#000"/>
<rect x="966" y="154" width="1" height="566" fill="#000"/>
<rect x="107" y="154" width="1" height="556" fill="#000"/>
<rect x="147" y="154" width="1" height="556" fill="#000"/>
<rect x="949" y="154" width="1" height="556" fill="#000"/>
<rect x="107" y="253" width="843" height="1" fill="#000"/>
<rect x="107" y="389" width="843" height="1" fill="#000"/>
<rect x="107" y="489" width="843" height="1" fill="#000"/>
<rect x="107" y="589" width="843" height="1" fill="#000"/>
<rect x="107" y="709" width="843" height="1" fill="#000"/>
<rect x="343.5" y="270.5" width="75" height="196" fill="#E4E4E4" stroke="#000" stroke-width="1"/>
<rect x="343" y="450" width="76" height="1" fill="#000"/>
<rect x="378" y="450" width="1" height="16" fill="#000"/>
<line x1="343.5" y1="283.5" x2="365.5" y2="270.5" stroke="#000" stroke-width="1"/>
<rect x="696.5" y="202.5" width="80" height="175" fill="#E4E4E4" stroke="#000" stroke-width="1"/>
<rect x="696" y="360" width="81" height="1" fill="#000"/>
<rect x="730" y="360" width="1" height="17" fill="#000"/>
<line x1="696.5" y1="217.5" x2="718.5" y2="202.5" stroke="#000" stroke-width="1"/>
<rect x="498.5" y="592.5" width="80" height="85" fill="#E4E4E4" stroke="#000" stroke-width="1"/>
<rect x="498" y="660" width="81" height="1" fill="#000"/>
<line x1="498.5" y1="608.5" x2="519.5" y2="592.5" stroke="#000" stroke-width="1"/>
<polygon points="159.5,298.5 215.5,298.5 215.5,326 187.5,353.5 159.5,326" fill="#fff" stroke="#000" stroke-width="1"/>
<polygon points="872.5,308.5 937.5,308.5 937.5,341 905,373.5 872.5,341" fill="#fff" stroke="#000" stroke-width="1"/>
<rect x="215" y="324" width="126" height="1" fill="#000"/>
<path d="M331,321 H334 V322 H336 V323 H339 V326 H336 V327 H334 V328 H331 Z" fill="#000"/>
<rect x="422" y="419" width="36" height="1" fill="#000"/>
<rect x="457" y="419" width="1" height="211" fill="#000"/>
<rect x="457" y="629" width="40" height="1" fill="#000"/>
<path d="M490,626 H493 V627 H495 V628 H498 V631 H495 V632 H493 V633 H490 Z" fill="#000"/>
<rect x="584" y="627" width="24" height="1" fill="#000"/>
<rect x="607" y="347" width="1" height="281" fill="#000"/>
<rect x="607" y="347" width="87" height="1" fill="#000"/>
<path d="M684,344 H687 V345 H689 V346 H692 V349 H689 V350 H687 V351 H684 Z" fill="#000"/>
<rect x="776" y="341" width="96" height="1" fill="#000"/>
<path d="M862,338 H865 V339 H867 V340 H870 V343 H867 V344 H865 V345 H862 Z" fill="#000"/>
<rect x="373" y="239" width="1" height="23" fill="#707070"/>
<polygon points="370,257 371,261 373.5,266 376,261 377,257" fill="#707070"/>
<rect x="418" y="292" width="27" height="1" fill="#707070"/>
<polygon points="439,289 443,290 448,292.5 443,295 439,296" fill="#707070"/>
<rect x="296" y="419" width="42" height="1" fill="#707070"/>
<polygon points="333,416 337,417 342,419.5 337,422 333,423" fill="#707070"/>
<rect x="377" y="471" width="1" height="13" fill="#707070"/>
<polygon points="374,476 375,472 377.5,467 380,472 381,476" fill="#707070"/>
<rect x="652" y="210" width="38" height="1" fill="#707070"/>
<polygon points="686,207 690,208 695,210.5 690,213 686,214" fill="#707070"/>
<rect x="731" y="180" width="1" height="17" fill="#707070"/>
<polygon points="728,192 729,196 731.5,201 734,196 735,192" fill="#707070"/>
<rect x="776" y="212" width="36" height="1" fill="#707070"/>
<polygon points="807,209 811,210 816,212.5 811,215 807,216" fill="#707070"/>
<rect x="757" y="382" width="1" height="16" fill="#707070"/>
<polygon points="754,387 755,383 757.5,378 760,383 761,387" fill="#707070"/>
<rect x="536" y="580" width="1" height="8" fill="#707070"/>
<polygon points="533,582 534,586 536.5,591 539,586 540,582" fill="#707070"/>
<rect x="452" y="656" width="40" height="1" fill="#707070"/>
<polygon points="488,653 492,654 497,656.5 492,659 488,660" fill="#707070"/>
<rect x="578" y="660" width="16" height="1" fill="#707070"/>
<polygon points="589,657 593,658 598,660.5 593,663 589,664" fill="#707070"/>
<rect x="532" y="682" width="1" height="7" fill="#707070"/>
<polygon points="529,687 530,683 532.5,678 535,683 536,687" fill="#707070"/>
<use href="#bl" x="314" y="217.1"/>
<text x="335" y="223.7" font-size="9" fill="#707070" text-anchor="start" font-weight="normal" textLength="104.9" lengthAdjust="spacingAndGlyphs">Communications Protocols</text>
<use href="#bl" x="314" y="227.3"/>
<text x="335" y="233.9" font-size="9" fill="#707070" text-anchor="start" font-weight="normal" textLength="76.4" lengthAdjust="spacingAndGlyphs">Release Guidelines</text>
<text x="461" y="296.5" font-size="9" fill="#707070" text-anchor="start" font-weight="normal" textLength="65.7" lengthAdjust="spacingAndGlyphs">Communications</text>
<use href="#bl" x="554" y="184.4"/>
<text x="575" y="191" font-size="9" fill="#707070" text-anchor="start" font-weight="normal" textLength="41.6" lengthAdjust="spacingAndGlyphs">Defect List</text>
<use href="#bl" x="554" y="194.4"/>
<text x="575" y="201" font-size="9" fill="#707070" text-anchor="start" font-weight="normal" textLength="53.4" lengthAdjust="spacingAndGlyphs">Known Errors</text>
<use href="#bl" x="554" y="204.9"/>
<text x="575" y="211.5" font-size="9" fill="#707070" text-anchor="start" font-weight="normal" textLength="42.1" lengthAdjust="spacingAndGlyphs">Equipment</text>
<text x="575" y="222.5" font-size="9" fill="#707070" text-anchor="start" font-weight="normal" textLength="61.7" lengthAdjust="spacingAndGlyphs">delivered to site</text>
<use href="#bl" x="554" y="226.0"/>
<text x="575" y="232.6" font-size="9" fill="#707070" text-anchor="start" font-weight="normal" textLength="57.3" lengthAdjust="spacingAndGlyphs">SW staging on</text>
<text x="575" y="243.6" font-size="9" fill="#707070" text-anchor="start" font-weight="normal" textLength="28.9" lengthAdjust="spacingAndGlyphs">servers</text>
<use href="#bl" x="670" y="166.70000000000002"/>
<text x="690" y="173.3" font-size="9" fill="#707070" text-anchor="start" font-weight="normal" textLength="84.8" lengthAdjust="spacingAndGlyphs">Site access privileges</text>
<use href="#bl" x="822" y="178.0"/>
<text x="842" y="184.6" font-size="9" fill="#707070" text-anchor="start" font-weight="normal" textLength="59.3" lengthAdjust="spacingAndGlyphs">Site Readiness</text>
<text x="842" y="194.4" font-size="9" fill="#707070" text-anchor="start" font-weight="normal" textLength="26.5" lengthAdjust="spacingAndGlyphs">Report</text>
<use href="#bl" x="822" y="198.9"/>
<text x="842" y="205.5" font-size="9" fill="#707070" text-anchor="start" font-weight="normal" textLength="53.4" lengthAdjust="spacingAndGlyphs">Known Errors</text>
<use href="#bl" x="822" y="209.70000000000002"/>
<text x="842" y="216.3" font-size="9" fill="#707070" text-anchor="start" font-weight="normal" textLength="44.6" lengthAdjust="spacingAndGlyphs">Staged SW</text>
<use href="#bl" x="822" y="219.9"/>
<text x="842" y="226.5" font-size="9" fill="#707070" text-anchor="start" font-weight="normal" textLength="52.9" lengthAdjust="spacingAndGlyphs">HW delivered</text>
<use href="#bl" x="822" y="230.70000000000002"/>
<text x="842" y="237.3" font-size="9" fill="#707070" text-anchor="start" font-weight="normal" textLength="65.8" lengthAdjust="spacingAndGlyphs">Update DSL with</text>
<text x="842" y="248.3" font-size="9" fill="#707070" text-anchor="start" font-weight="normal" textLength="63.7" lengthAdjust="spacingAndGlyphs">new SW version</text>
<text x="621.5" y="274.3" font-size="9" fill="#707070" text-anchor="start" font-weight="normal" textLength="69.1" lengthAdjust="spacingAndGlyphs">Change Calendar</text>
<text x="790" y="285.8" font-size="9" fill="#707070" text-anchor="start" font-weight="normal" textLength="43.6" lengthAdjust="spacingAndGlyphs">Site survey</text>
<use href="#bl" x="175" y="408.9"/>
<text x="195" y="415.5" font-size="9" fill="#707070" text-anchor="start" font-weight="normal" textLength="104.4" lengthAdjust="spacingAndGlyphs">Communicatons templates</text>
<use href="#bl" x="175" y="420.0"/>
<text x="195" y="426.6" font-size="9" fill="#707070" text-anchor="start" font-weight="normal" textLength="70.1" lengthAdjust="spacingAndGlyphs">Release schedule</text>
<use href="#bl" x="326" y="485.09999999999997"/>
<text x="345" y="491.7" font-size="9" fill="#707070" text-anchor="start" font-weight="normal" textLength="80.8" lengthAdjust="spacingAndGlyphs">Template completion</text>
<use href="#bl" x="326" y="495.4"/>
<text x="345" y="502" font-size="9" fill="#707070" text-anchor="start" font-weight="normal" textLength="22.1" lengthAdjust="spacingAndGlyphs">Email</text>
<use href="#bl" x="744" y="395.9"/>
<text x="764" y="402.5" font-size="9" fill="#707070" text-anchor="start" font-weight="normal" textLength="19.1" lengthAdjust="spacingAndGlyphs">SMS</text>
<use href="#bl" x="744" y="407.0"/>
<text x="764" y="413.6" font-size="9" fill="#707070" text-anchor="start" font-weight="normal" textLength="61.7" lengthAdjust="spacingAndGlyphs">Online Services</text>
<use href="#bl" x="744" y="417.15"/>
<text x="764" y="423.75" font-size="9" fill="#707070" text-anchor="start" font-weight="normal" textLength="35.8" lengthAdjust="spacingAndGlyphs">Checklist</text>
<use href="#bl" x="744" y="428.09999999999997"/>
<text x="764" y="434.7" font-size="9" fill="#707070" text-anchor="start" font-weight="normal" textLength="42.1" lengthAdjust="spacingAndGlyphs">file staging</text>
<use href="#bl" x="495" y="559.1999999999999"/>
<text x="515" y="565.8" font-size="9" fill="#707070" text-anchor="start" font-weight="normal" textLength="57.5" lengthAdjust="spacingAndGlyphs">Training Policy</text>
<use href="#bl" x="495" y="569.1"/>
<text x="515" y="575.7" font-size="9" fill="#707070" text-anchor="start" font-weight="normal" textLength="61.7" lengthAdjust="spacingAndGlyphs">Release budget</text>
<use href="#bl" x="369" y="652.1"/>
<text x="389" y="658.7" font-size="9" fill="#707070" text-anchor="start" font-weight="normal" textLength="52.4" lengthAdjust="spacingAndGlyphs">Release Plan</text>
<use href="#bl" x="369" y="662.3"/>
<text x="389" y="668.9" font-size="9" fill="#707070" text-anchor="start" font-weight="normal" textLength="47.5" lengthAdjust="spacingAndGlyphs">Rollout Plan</text>
<use href="#bl" x="589" y="645.4"/>
<text x="609" y="652" font-size="9" fill="#707070" text-anchor="start" font-weight="normal" textLength="29.6" lengthAdjust="spacingAndGlyphs">Trained</text>
<text x="609" y="662.5" font-size="9" fill="#707070" text-anchor="start" font-weight="normal" textLength="16.5" lengthAdjust="spacingAndGlyphs">staff</text>
<use href="#bl" x="521" y="679.9"/>
<text x="540" y="686.5" font-size="9" fill="#707070" text-anchor="start" font-weight="normal" textLength="40.7" lengthAdjust="spacingAndGlyphs">Instruction</text>
<use href="#bl" x="521" y="690.6999999999999"/>
<text x="540" y="697.3" font-size="9" fill="#707070" text-anchor="start" font-weight="normal" textLength="43.6" lengthAdjust="spacingAndGlyphs">Notification</text>
<text x="380.5" y="354" font-size="9.5" fill="#000" text-anchor="middle" font-weight="normal" textLength="49.6" lengthAdjust="spacingAndGlyphs">Develop and</text>
<text x="380.5" y="364.6" font-size="9.5" fill="#000" text-anchor="middle" font-weight="normal" textLength="20.6" lengthAdjust="spacingAndGlyphs">Send</text>
<text x="380.5" y="375.5" font-size="9.5" fill="#000" text-anchor="middle" font-weight="normal" textLength="15.2" lengthAdjust="spacingAndGlyphs">Site</text>
<text x="380.5" y="385.7" font-size="9.5" fill="#000" text-anchor="middle" font-weight="normal" textLength="65.8" lengthAdjust="spacingAndGlyphs">Communications</text>
<text x="736.5" y="287.2" font-size="9.5" fill="#000" text-anchor="middle" font-weight="normal" textLength="61.9" lengthAdjust="spacingAndGlyphs">Prepare Site for</text>
<text x="736.5" y="297.7" font-size="9.5" fill="#000" text-anchor="middle" font-weight="normal" textLength="32.4" lengthAdjust="spacingAndGlyphs">Release</text>
<text x="538.5" y="625.6" font-size="9.5" fill="#000" text-anchor="middle" font-weight="normal" textLength="49.6" lengthAdjust="spacingAndGlyphs">Develop and</text>
<text x="538.5" y="636.7" font-size="9.5" fill="#000" text-anchor="middle" font-weight="normal" textLength="41.2" lengthAdjust="spacingAndGlyphs">Implement</text>
<text x="538.5" y="647.5" font-size="9.5" fill="#000" text-anchor="middle" font-weight="normal" textLength="49.1" lengthAdjust="spacingAndGlyphs">Site Training</text>
<text x="187.5" y="310.3" font-size="9.5" fill="#000" text-anchor="middle" font-weight="normal" textLength="18.6" lengthAdjust="spacingAndGlyphs">RM4</text>
<text x="187.5" y="321.25" font-size="9.5" fill="#000" text-anchor="middle" font-weight="normal" textLength="27.5" lengthAdjust="spacingAndGlyphs">Rollout</text>
<text x="187.5" y="331.25" font-size="9.5" fill="#000" text-anchor="middle" font-weight="normal" textLength="34.4" lengthAdjust="spacingAndGlyphs">Planning</text>
<text x="905" y="324.7" font-size="9.5" fill="#000" text-anchor="middle" font-weight="normal" textLength="18.6" lengthAdjust="spacingAndGlyphs">RM6</text>
<text x="905" y="335.2" font-size="9.5" fill="#000" text-anchor="middle" font-weight="normal" textLength="44.2" lengthAdjust="spacingAndGlyphs">Distribution</text>
<text x="905" y="345.7" font-size="9.5" fill="#000" text-anchor="middle" font-weight="normal" textLength="50.6" lengthAdjust="spacingAndGlyphs">&amp; Installation</text>
<text x="347.5" y="461" font-size="9.5" fill="#000" text-anchor="start" font-weight="normal" textLength="26.0" lengthAdjust="spacingAndGlyphs">RM5.1</text>
<text x="699.5" y="371.6" font-size="9.5" fill="#000" text-anchor="start" font-weight="normal" textLength="26.0" lengthAdjust="spacingAndGlyphs">RM5.3</text>
<text x="505" y="671.3" font-size="9.5" fill="#000" text-anchor="start" font-weight="normal" textLength="26.0" lengthAdjust="spacingAndGlyphs">RM5.2</text>
<text x="0" y="0" font-size="11" font-weight="bold" fill="#000" text-anchor="middle" textLength="64.4" lengthAdjust="spacingAndGlyphs" transform="translate(131,203.5) rotate(-90)">Release Mgr</text>
<text x="0" y="0" font-size="11" font-weight="bold" fill="#000" text-anchor="middle" textLength="82.8" lengthAdjust="spacingAndGlyphs" transform="translate(131,321) rotate(-90)">Migration Team</text>
<text x="0" y="0" font-size="11" font-weight="bold" fill="#000" text-anchor="middle" textLength="89.5" lengthAdjust="spacingAndGlyphs" transform="translate(131,439) rotate(-90)">Communications</text>
<text x="0" y="0" font-size="11" font-weight="bold" fill="#000" text-anchor="middle" textLength="75.6" lengthAdjust="spacingAndGlyphs" transform="translate(131,538.8) rotate(-90)">Training Team</text>
</svg>
</body></html>
